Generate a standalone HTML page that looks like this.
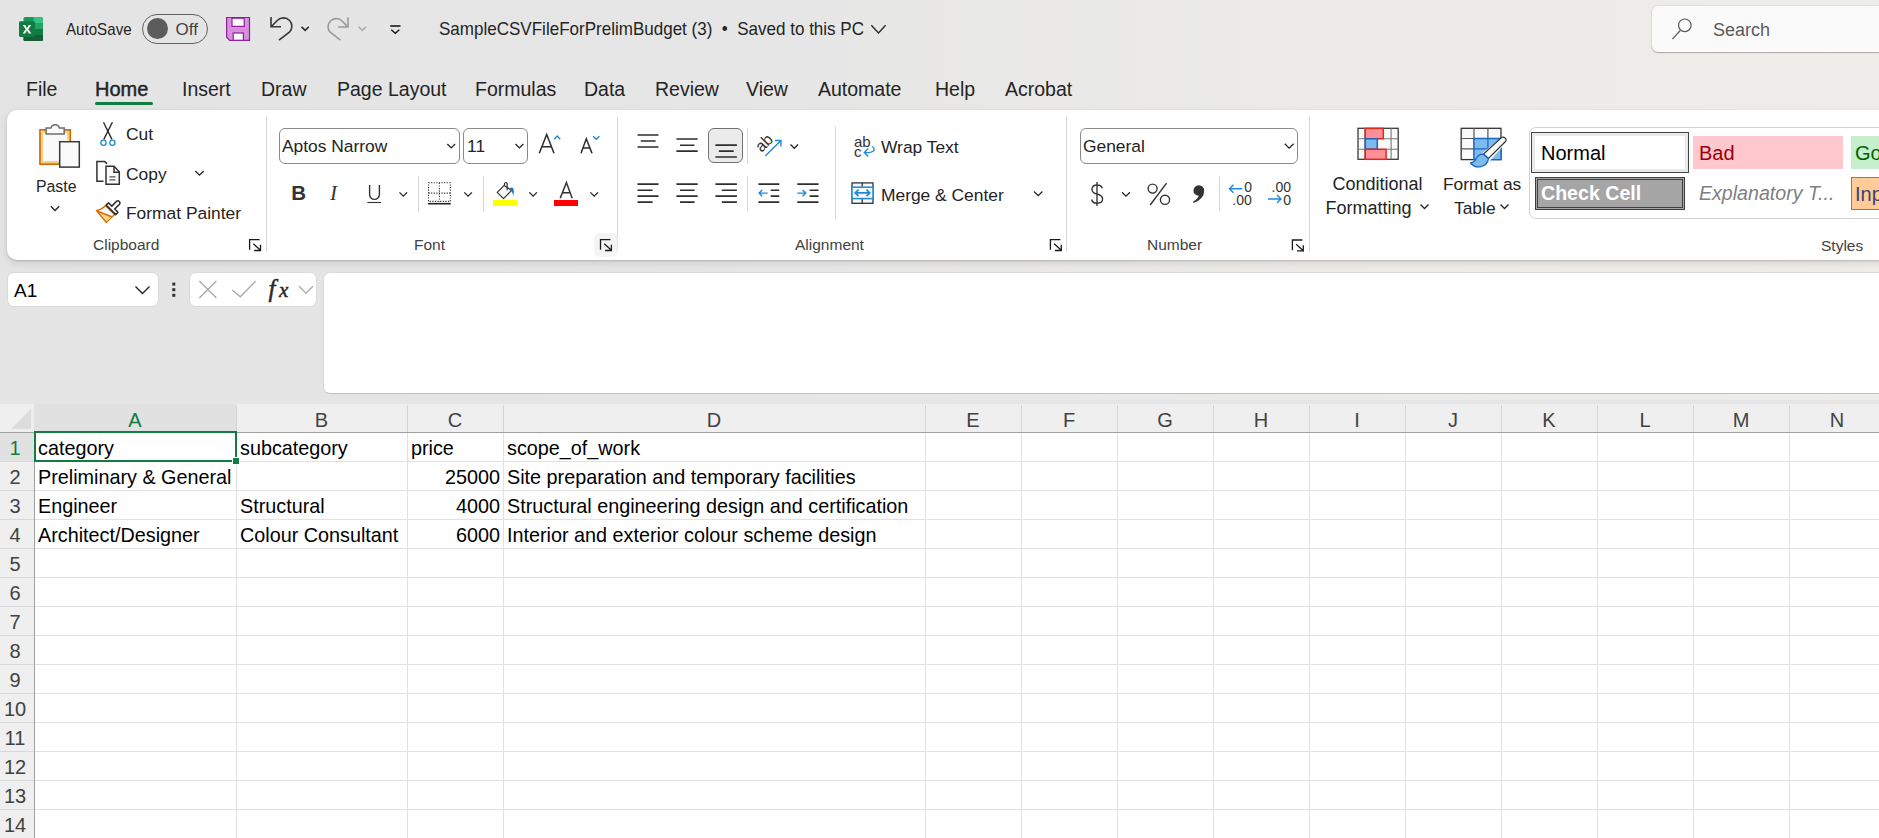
<!DOCTYPE html>
<html><head><meta charset="utf-8">
<style>
html,body{margin:0;padding:0;width:1879px;height:838px;overflow:hidden;}
body{position:relative;font-family:"Liberation Sans",sans-serif;color:#242424;background:#e5e5e5;}
.a{position:absolute;white-space:nowrap;line-height:1;}
#top{position:absolute;left:0;top:0;width:1879px;height:400px;background:linear-gradient(90deg,#e4e4e4 0%,#e6e6e6 40%,#ecebe8 70%,#efedea 100%);}
#ribbon{position:absolute;left:7px;top:110px;width:1900px;height:150px;background:#fff;border-radius:10px;box-shadow:0 1px 2px rgba(0,0,0,0.16), 0 3px 9px rgba(0,0,0,0.10);}
.t{font-size:19.5px;color:#242424;}
.lbl{font-size:17.4px;color:#242424;}
.grp{font-size:15.5px;color:#424242;}
.vsep{position:absolute;width:1px;background:#d6d6d6;}
.box{position:absolute;background:#fff;border:1px solid #8a8a8a;border-radius:6px;box-sizing:border-box;}
#grid{position:absolute;left:0;top:404px;width:1879px;height:434px;background:#fff;}
.cell{font-size:19.8px;color:#000;}
.hdr{font-size:20px;color:#444;}
</style></head><body>
<div id="top"></div>

<!-- Title bar -->
<div class="a" style="left:65.5px;top:20.6px;font-size:17px;color:#242424;transform:scaleX(0.89);transform-origin:0 0;">AutoSave</div>
<div style="position:absolute;left:142px;top:14px;width:64px;height:28px;border:1px solid #616161;border-radius:15px;background:#fff0;"></div>
<div style="position:absolute;left:147px;top:18px;width:21px;height:21px;border-radius:50%;background:#5c5c5c;"></div>
<div class="a" style="left:175.5px;top:21px;font-size:17px;color:#424242;">Off</div>
<div class="a" style="left:438.5px;top:19.8px;font-size:18.5px;color:#242424;transform:scaleX(0.92);transform-origin:0 0;">SampleCSVFileForPrelimBudget (3) &nbsp;•&nbsp; Saved to this PC</div>
<div style="position:absolute;left:1652px;top:6px;width:260px;height:46px;background:#fafafa;border-radius:6px;box-shadow:0 1px 1px rgba(0,0,0,0.25), 0 0 0 1px rgba(0,0,0,0.06);"></div>
<div class="a" style="left:1713px;top:21px;font-size:18px;color:#5a5a5a;">Search</div>

<!-- Tabs -->
<div class="a t" style="left:26px;top:80px;">File</div>
<div class="a t" style="left:95px;top:79px;font-size:20px;-webkit-text-stroke:0.45px #242424;">Home</div>
<div style="position:absolute;left:95px;top:102px;width:58px;height:3px;border-radius:2px;background:#107c41;"></div>
<div class="a t" style="left:182px;top:80px;">Insert</div>
<div class="a t" style="left:261px;top:80px;">Draw</div>
<div class="a t" style="left:337px;top:80px;">Page Layout</div>
<div class="a t" style="left:475px;top:80px;">Formulas</div>
<div class="a t" style="left:584px;top:80px;">Data</div>
<div class="a t" style="left:655px;top:80px;">Review</div>
<div class="a t" style="left:746px;top:80px;">View</div>
<div class="a t" style="left:818px;top:80px;">Automate</div>
<div class="a t" style="left:935px;top:80px;">Help</div>
<div class="a t" style="left:1005px;top:80px;">Acrobat</div>

<!-- Ribbon -->
<div id="ribbon"></div>
<div class="vsep" style="left:266px;top:117px;height:134px;"></div>
<div class="vsep" style="left:617px;top:117px;height:134px;"></div>
<div class="vsep" style="left:1066px;top:117px;height:134px;"></div>
<div class="vsep" style="left:1309px;top:117px;height:134px;"></div>

<!-- Clipboard -->
<div class="a lbl" style="left:36px;top:178px;transform:scaleX(0.91);transform-origin:0 0;">Paste</div>
<div class="a lbl" style="left:126px;top:126px;">Cut</div>
<div class="a lbl" style="left:126px;top:166px;">Copy</div>
<div class="a lbl" style="left:126px;top:205px;">Format Painter</div>
<div class="a grp" style="left:93px;top:237px;">Clipboard</div>

<!-- Font -->
<div class="box" style="left:279px;top:128px;width:181px;height:36px;"></div>
<div class="a" style="left:282px;top:138px;font-size:17.4px;color:#242424;">Aptos Narrow</div>
<div class="box" style="left:463px;top:128px;width:65px;height:36px;"></div>
<div class="a" style="left:467px;top:138px;font-size:17.4px;color:#242424;">11</div>
<div class="a grp" style="left:414px;top:237px;">Font</div>

<!-- Alignment -->
<div style="position:absolute;left:708px;top:128px;width:35px;height:35px;border:1px solid #707070;border-radius:6px;background:#ebebeb;box-sizing:border-box;"></div>
<div class="a lbl" style="left:881px;top:139px;">Wrap Text</div>
<div class="a lbl" style="left:881px;top:187px;">Merge &amp; Center</div>
<div class="a grp" style="left:795px;top:237px;">Alignment</div>

<!-- Number -->
<div class="box" style="left:1080px;top:128px;width:218px;height:36px;"></div>
<div class="a" style="left:1083px;top:138px;font-size:17.4px;color:#242424;">General</div>
<div class="a grp" style="left:1147px;top:237px;">Number</div>

<!-- Styles -->
<div class="a lbl" style="left:1332.5px;top:175px;font-size:18px;">Conditional</div>
<div class="a lbl" style="left:1325.5px;top:199px;font-size:18px;">Formatting</div>
<div class="a lbl" style="left:1443px;top:176px;">Format as</div>
<div class="a lbl" style="left:1454px;top:200px;">Table</div>
<!-- Styles gallery -->
<div style="position:absolute;left:1529px;top:127px;width:400px;height:92px;border:1px solid #d2d2d2;border-radius:7px;box-sizing:border-box;background:#fff;"></div>
<div style="position:absolute;left:1531px;top:132px;width:158px;height:41px;border:1px solid #454545;box-sizing:border-box;background:#fff;box-shadow:inset 0 0 0 3px #e9e9e9;"></div>
<div class="a" style="left:1541px;top:143px;font-size:20px;color:#000;">Normal</div>
<div style="position:absolute;left:1693px;top:136px;width:150px;height:33px;background:#ffc7ce;"></div>
<div class="a" style="left:1699px;top:143px;font-size:20px;color:#9c0006;">Bad</div>
<div style="position:absolute;left:1851px;top:136px;width:60px;height:33px;background:#c6efce;"></div>
<div class="a" style="left:1855px;top:143px;font-size:20px;color:#006100;">Good</div>
<div style="position:absolute;left:1535px;top:177px;width:150px;height:33px;border:1px solid #3f3f3f;box-sizing:border-box;background:#a5a5a5;box-shadow:inset 0 0 0 1px #a5a5a5, inset 0 0 0 2px #3f3f3f;"></div>
<div class="a" style="left:1541px;top:184px;font-size:19.6px;font-weight:bold;color:#fff;">Check Cell</div>
<div class="a" style="left:1699px;top:184px;font-size:19.6px;font-style:italic;color:#7f7f7f;">Explanatory T...</div>
<div style="position:absolute;left:1851px;top:177px;width:60px;height:33px;border:1px solid #7f7f7f;box-sizing:border-box;background:#ffcc99;"></div>
<div class="a" style="left:1855px;top:184px;font-size:20px;color:#3f3f76;">Input</div>
<div class="a grp" style="left:1821px;top:238px;">Styles</div>

<!-- Formula bar -->
<div style="position:absolute;left:7px;top:272px;width:152px;height:35px;background:#fff;border-radius:7px;border:1px solid #dadada;box-sizing:border-box;"></div>
<div class="a" style="left:14px;top:280.5px;font-size:19px;color:#000;">A1</div>
<div style="position:absolute;left:189px;top:272px;width:128px;height:35px;background:#fff;border-radius:7px;border:1px solid #dadada;box-sizing:border-box;"></div>
<div style="position:absolute;left:323px;top:272px;width:1600px;height:122px;background:#fff;border-radius:7px;border:1px solid #d9d9d9;border-bottom-color:#c2c2c2;box-sizing:border-box;"></div>

<!-- Grid -->
<div id="grid"></div>
<!--GRID-->
<div style="position:absolute;left:0;top:404px;width:1879px;height:28px;background:#efefef;"></div>
<div style="position:absolute;left:0;top:432px;width:34px;height:406px;background:#efefef;"></div>
<div style="position:absolute;left:34px;top:404px;width:202px;height:28px;background:#e1e1e1;"></div>
<div style="position:absolute;left:0;top:432px;width:34px;height:29px;background:#e1e1e1;"></div>
<svg style="position:absolute;left:0;top:404px" width="34" height="28"><polygon points="31,5 31,25 11,25" fill="#dcdcdc"/></svg>
<div style="position:absolute;left:236px;top:405px;width:1px;height:27px;background:#d4d4d4;"></div>
<div style="position:absolute;left:236px;top:433px;width:1px;height:405px;background:#e1e1e1;"></div>
<div style="position:absolute;left:407px;top:405px;width:1px;height:27px;background:#d4d4d4;"></div>
<div style="position:absolute;left:407px;top:433px;width:1px;height:405px;background:#e1e1e1;"></div>
<div style="position:absolute;left:503px;top:405px;width:1px;height:27px;background:#d4d4d4;"></div>
<div style="position:absolute;left:503px;top:433px;width:1px;height:405px;background:#e1e1e1;"></div>
<div style="position:absolute;left:925px;top:405px;width:1px;height:27px;background:#d4d4d4;"></div>
<div style="position:absolute;left:925px;top:433px;width:1px;height:405px;background:#e1e1e1;"></div>
<div style="position:absolute;left:1021px;top:405px;width:1px;height:27px;background:#d4d4d4;"></div>
<div style="position:absolute;left:1021px;top:433px;width:1px;height:405px;background:#e1e1e1;"></div>
<div style="position:absolute;left:1117px;top:405px;width:1px;height:27px;background:#d4d4d4;"></div>
<div style="position:absolute;left:1117px;top:433px;width:1px;height:405px;background:#e1e1e1;"></div>
<div style="position:absolute;left:1213px;top:405px;width:1px;height:27px;background:#d4d4d4;"></div>
<div style="position:absolute;left:1213px;top:433px;width:1px;height:405px;background:#e1e1e1;"></div>
<div style="position:absolute;left:1309px;top:405px;width:1px;height:27px;background:#d4d4d4;"></div>
<div style="position:absolute;left:1309px;top:433px;width:1px;height:405px;background:#e1e1e1;"></div>
<div style="position:absolute;left:1405px;top:405px;width:1px;height:27px;background:#d4d4d4;"></div>
<div style="position:absolute;left:1405px;top:433px;width:1px;height:405px;background:#e1e1e1;"></div>
<div style="position:absolute;left:1501px;top:405px;width:1px;height:27px;background:#d4d4d4;"></div>
<div style="position:absolute;left:1501px;top:433px;width:1px;height:405px;background:#e1e1e1;"></div>
<div style="position:absolute;left:1597px;top:405px;width:1px;height:27px;background:#d4d4d4;"></div>
<div style="position:absolute;left:1597px;top:433px;width:1px;height:405px;background:#e1e1e1;"></div>
<div style="position:absolute;left:1693px;top:405px;width:1px;height:27px;background:#d4d4d4;"></div>
<div style="position:absolute;left:1693px;top:433px;width:1px;height:405px;background:#e1e1e1;"></div>
<div style="position:absolute;left:1789px;top:405px;width:1px;height:27px;background:#d4d4d4;"></div>
<div style="position:absolute;left:1789px;top:433px;width:1px;height:405px;background:#e1e1e1;"></div>
<div style="position:absolute;left:1885px;top:405px;width:1px;height:27px;background:#d4d4d4;"></div>
<div style="position:absolute;left:1885px;top:433px;width:1px;height:405px;background:#e1e1e1;"></div>
<div style="position:absolute;left:35px;top:461px;width:1844px;height:1px;background:#e1e1e1;"></div>
<div style="position:absolute;left:0px;top:461px;width:34px;height:1px;background:#d8d8d8;"></div>
<div style="position:absolute;left:35px;top:490px;width:1844px;height:1px;background:#e1e1e1;"></div>
<div style="position:absolute;left:0px;top:490px;width:34px;height:1px;background:#d8d8d8;"></div>
<div style="position:absolute;left:35px;top:519px;width:1844px;height:1px;background:#e1e1e1;"></div>
<div style="position:absolute;left:0px;top:519px;width:34px;height:1px;background:#d8d8d8;"></div>
<div style="position:absolute;left:35px;top:548px;width:1844px;height:1px;background:#e1e1e1;"></div>
<div style="position:absolute;left:0px;top:548px;width:34px;height:1px;background:#d8d8d8;"></div>
<div style="position:absolute;left:35px;top:577px;width:1844px;height:1px;background:#e1e1e1;"></div>
<div style="position:absolute;left:0px;top:577px;width:34px;height:1px;background:#d8d8d8;"></div>
<div style="position:absolute;left:35px;top:606px;width:1844px;height:1px;background:#e1e1e1;"></div>
<div style="position:absolute;left:0px;top:606px;width:34px;height:1px;background:#d8d8d8;"></div>
<div style="position:absolute;left:35px;top:635px;width:1844px;height:1px;background:#e1e1e1;"></div>
<div style="position:absolute;left:0px;top:635px;width:34px;height:1px;background:#d8d8d8;"></div>
<div style="position:absolute;left:35px;top:664px;width:1844px;height:1px;background:#e1e1e1;"></div>
<div style="position:absolute;left:0px;top:664px;width:34px;height:1px;background:#d8d8d8;"></div>
<div style="position:absolute;left:35px;top:693px;width:1844px;height:1px;background:#e1e1e1;"></div>
<div style="position:absolute;left:0px;top:693px;width:34px;height:1px;background:#d8d8d8;"></div>
<div style="position:absolute;left:35px;top:722px;width:1844px;height:1px;background:#e1e1e1;"></div>
<div style="position:absolute;left:0px;top:722px;width:34px;height:1px;background:#d8d8d8;"></div>
<div style="position:absolute;left:35px;top:751px;width:1844px;height:1px;background:#e1e1e1;"></div>
<div style="position:absolute;left:0px;top:751px;width:34px;height:1px;background:#d8d8d8;"></div>
<div style="position:absolute;left:35px;top:780px;width:1844px;height:1px;background:#e1e1e1;"></div>
<div style="position:absolute;left:0px;top:780px;width:34px;height:1px;background:#d8d8d8;"></div>
<div style="position:absolute;left:35px;top:809px;width:1844px;height:1px;background:#e1e1e1;"></div>
<div style="position:absolute;left:0px;top:809px;width:34px;height:1px;background:#d8d8d8;"></div>
<div style="position:absolute;left:35px;top:838px;width:1844px;height:1px;background:#e1e1e1;"></div>
<div style="position:absolute;left:0px;top:838px;width:34px;height:1px;background:#d8d8d8;"></div>
<div style="position:absolute;left:0;top:432px;width:1879px;height:1px;background:#a0a0a0;"></div>
<div style="position:absolute;left:34px;top:432px;width:1px;height:406px;background:#a0a0a0;"></div>
<div class="a hdr" style="left:34px;width:202px;text-align:center;top:410px;color:#107c41;">A</div>
<div class="a hdr" style="left:236px;width:171px;text-align:center;top:410px;color:#424242;">B</div>
<div class="a hdr" style="left:407px;width:96px;text-align:center;top:410px;color:#424242;">C</div>
<div class="a hdr" style="left:503px;width:422px;text-align:center;top:410px;color:#424242;">D</div>
<div class="a hdr" style="left:925px;width:96px;text-align:center;top:410px;color:#424242;">E</div>
<div class="a hdr" style="left:1021px;width:96px;text-align:center;top:410px;color:#424242;">F</div>
<div class="a hdr" style="left:1117px;width:96px;text-align:center;top:410px;color:#424242;">G</div>
<div class="a hdr" style="left:1213px;width:96px;text-align:center;top:410px;color:#424242;">H</div>
<div class="a hdr" style="left:1309px;width:96px;text-align:center;top:410px;color:#424242;">I</div>
<div class="a hdr" style="left:1405px;width:96px;text-align:center;top:410px;color:#424242;">J</div>
<div class="a hdr" style="left:1501px;width:96px;text-align:center;top:410px;color:#424242;">K</div>
<div class="a hdr" style="left:1597px;width:96px;text-align:center;top:410px;color:#424242;">L</div>
<div class="a hdr" style="left:1693px;width:96px;text-align:center;top:410px;color:#424242;">M</div>
<div class="a hdr" style="left:1789px;width:96px;text-align:center;top:410px;color:#424242;">N</div>
<div class="a hdr" style="left:0;width:30px;text-align:center;top:438px;color:#107c41;">1</div>
<div class="a hdr" style="left:0;width:30px;text-align:center;top:467px;color:#424242;">2</div>
<div class="a hdr" style="left:0;width:30px;text-align:center;top:496px;color:#424242;">3</div>
<div class="a hdr" style="left:0;width:30px;text-align:center;top:525px;color:#424242;">4</div>
<div class="a hdr" style="left:0;width:30px;text-align:center;top:554px;color:#424242;">5</div>
<div class="a hdr" style="left:0;width:30px;text-align:center;top:583px;color:#424242;">6</div>
<div class="a hdr" style="left:0;width:30px;text-align:center;top:612px;color:#424242;">7</div>
<div class="a hdr" style="left:0;width:30px;text-align:center;top:641px;color:#424242;">8</div>
<div class="a hdr" style="left:0;width:30px;text-align:center;top:670px;color:#424242;">9</div>
<div class="a hdr" style="left:0;width:30px;text-align:center;top:699px;color:#424242;">10</div>
<div class="a hdr" style="left:0;width:30px;text-align:center;top:728px;color:#424242;">11</div>
<div class="a hdr" style="left:0;width:30px;text-align:center;top:757px;color:#424242;">12</div>
<div class="a hdr" style="left:0;width:30px;text-align:center;top:786px;color:#424242;">13</div>
<div class="a hdr" style="left:0;width:30px;text-align:center;top:815px;color:#424242;">14</div>
<div class="a cell" style="left:38px;top:439px;">category</div>
<div class="a cell" style="left:240px;top:439px;">subcategory</div>
<div class="a cell" style="left:411px;top:439px;">price</div>
<div class="a cell" style="left:507px;top:439px;">scope_of_work</div>
<div class="a cell" style="left:38px;top:468px;">Preliminary &amp; General</div>
<div class="a cell" style="left:407px;width:93px;text-align:right;top:468px;">25000</div>
<div class="a cell" style="left:507px;top:468px;">Site preparation and temporary facilities</div>
<div class="a cell" style="left:38px;top:497px;">Engineer</div>
<div class="a cell" style="left:240px;top:497px;">Structural</div>
<div class="a cell" style="left:407px;width:93px;text-align:right;top:497px;">4000</div>
<div class="a cell" style="left:507px;top:497px;">Structural engineering design and certification</div>
<div class="a cell" style="left:38px;top:526px;">Architect/Designer</div>
<div class="a cell" style="left:240px;top:526px;">Colour Consultant</div>
<div class="a cell" style="left:407px;width:93px;text-align:right;top:526px;">6000</div>
<div class="a cell" style="left:507px;top:526px;">Interior and exterior colour scheme design</div>
<div style="position:absolute;left:34px;top:431px;width:203px;height:31px;border:2px solid #107c41;box-sizing:border-box;"></div>
<div style="position:absolute;left:232px;top:457px;width:6px;height:6px;background:#107c41;border:1px solid #fff;box-sizing:content-box;"></div>
<!--/GRID-->

<!--ICONS-->
<svg style="position:absolute;left:0;top:0" width="1879" height="838">
<!-- excel logo -->
<g>
<rect x="23.5" y="17" width="19.5" height="24" rx="1.5" fill="#1a9a5a"/>
<path d="M33.5 17 H41.5 Q43 17 43 18.5 V23 H33.5 Z" fill="#33c481"/>
<rect x="33.5" y="23" width="9.5" height="6" fill="#21a366"/>
<rect x="33.5" y="29" width="9.5" height="6" fill="#107c41"/>
<path d="M23.5 35 H43 V39.5 Q43 41 41.5 41 H25 Q23.5 41 23.5 39.5 Z" fill="#185c37"/>
<rect x="19" y="21.3" width="16" height="15.6" rx="1.3" fill="#107c41"/>
<path d="M22.8 25 L25.3 25 L27 28.2 L28.8 25 L31.2 25 L28.3 29.2 L31.3 33.4 L28.8 33.4 L27 30.2 L25.2 33.4 L22.7 33.4 L25.7 29.2 Z" fill="#fff"/>
</g>
<!-- save -->
<path d="M226.6 17.5 H249.5 V40.3 H229.7 L226.6 37.2 Z" fill="#d890dc" stroke="#8f1f9f" stroke-width="1.2"/>
<rect x="232" y="18.2" width="12.2" height="8.2" fill="#fafafa" stroke="#8f1f9f" stroke-width="1.2"/>
<rect x="233.2" y="33" width="10.2" height="7.3" fill="#fafafa" stroke="#8f1f9f" stroke-width="1.2"/>
<!-- undo -->
<g fill="none" stroke="#363636" stroke-width="1.6">
<path d="M271 17 V26.8 H281"/>
<path d="M271.6 26.2 L277.5 20.3 A8.4 8.4 0 0 1 289.4 32.2 L279 40.2"/>
<path d="M301.5 26.8 L305.2 30.3 L308.8 26.8" stroke="#2a2a2a"/>
</g>
<!-- redo -->
<g fill="none" stroke="#9a9a9a" stroke-width="1.6">
<path d="M348 17.2 V27 H338.2"/>
<path d="M347.4 26.4 L341.5 20.5 A8.2 8.2 0 0 0 329.9 32 L340.4 40.2"/>
<path d="M358.6 26.8 L362.3 30.3 L366 26.8" stroke="#b0b0b0"/>
</g>
<!-- qat -->
<path d="M390.2 26 H400.5" stroke="#1a1a1a" stroke-width="1.6"/>
<path d="M391.3 29.8 L395.3 33.3 L399.3 29.8" fill="none" stroke="#1a1a1a" stroke-width="1.5"/>
<!-- title chevron -->
<path d="M871.3 25.3 L878.5 33 L885.6 25.3" fill="none" stroke="#2a2a2a" stroke-width="1.4"/>
<!-- paste -->
<rect x="40" y="129.9" width="30.2" height="34.2" fill="#fafafa" stroke="#d86400" stroke-width="1.7"/>
<path d="M42.1 132 H68.1 V140 M42.1 132 V162 H59" fill="none" stroke="#f4d27c" stroke-width="2"/>
<path d="M46.1 128.1 H51 A4.3 4.3 0 0 1 59.4 128.1 H64.2 V134 H46.1 Z" fill="#fafafa" stroke="#6e6e6e" stroke-width="1.5"/>
<rect x="59.7" y="141.7" width="19.6" height="25.4" fill="#fafafa" stroke="#383838" stroke-width="1.5"/>
<path d="M50.8 206.3 L55 210.5 L59.2 206.3" fill="none" stroke="#242424" stroke-width="1.3"/>
<!-- scissors -->
<g stroke="#262626" stroke-width="1.35" fill="none">
<path d="M103.5 122.2 L111.9 139.4"/><path d="M112.4 122.2 L103.8 139.4"/>
</g>
<circle cx="103.5" cy="142.8" r="2.6" fill="#fff" stroke="#1e8ad6" stroke-width="1.3"/>
<circle cx="112.4" cy="142.8" r="2.6" fill="#fff" stroke="#1e8ad6" stroke-width="1.3"/>
<!-- copy -->
<g stroke="#333" stroke-width="1.5" fill="none">
<path d="M103.5 181.2 H96.9 V161.6 H104.6 L107.1 163.6"/>
<path d="M106 166.2 H114 L119.3 171.7 V184.3 H106 Z" fill="#fafafa"/>
<path d="M114 166.2 V172.2 H119.3"/>
</g>
<g stroke="#555" stroke-width="1.2"><path d="M109.4 176.8 H115.5 M109.4 179.9 H115.5"/></g>
<path d="M195.3 171 L199.5 175.2 L203.7 171" fill="none" stroke="#242424" stroke-width="1.3"/>
<!-- format painter -->
<path d="M96.5 210.5 Q101.5 210 105.7 205.6 L114.6 214.5 L106.3 222.2 Z" fill="#fafafa" stroke="#dc6a00" stroke-width="1.5" stroke-linejoin="round"/>
<path d="M100.5 213.3 L111.8 217.2 L106.4 221.3 Z" fill="#f8d57f"/>
<path d="M97.5 211.3 L112.3 217" stroke="#dc6a00" stroke-width="1.5"/>
<path d="M106.2 205.1 L108.5 202.8 L111.8 206.1 L116.6 201.3 Q117.8 200.1 119 201.3 L119.5 201.8 Q120.7 203 119.5 204.2 L114.7 209 L118 212.3 L115.7 214.6 Z" fill="#fafafa" stroke="#2a2a2a" stroke-width="1.5" stroke-linejoin="round"/>
<!-- launchers -->
<rect x="594.3" y="233" width="23.3" height="23.8" rx="5" fill="#f4f4f4"/>
<g fill="none" stroke="#1a1a1a" stroke-width="1.3">
<path d="M249.6 249.79999999999998 V239.6 H259.6 M253.4 243.79999999999998 L260.2 250.1 M260.5 244.79999999999998 V250.5 H254.2"/>
<path d="M600.5 249.79999999999998 V239.6 H610.5 M604.3 243.79999999999998 L611.1 250.1 M611.4 244.79999999999998 V250.5 H605.1"/>
<path d="M1050.4 249.79999999999998 V239.6 H1060.4 M1054.2 243.79999999999998 L1061.0 250.1 M1061.3000000000002 244.79999999999998 V250.5 H1055.0"/>
<path d="M1292.4 250.2 V240 H1302.4 M1296.2 244.2 L1303.0 250.5 M1303.3000000000002 245.2 V250.9 H1297.0"/>
</g>
<!-- font group -->
<g fill="none" stroke="#242424" stroke-width="1.3">
<path d="M447.3 144 L451.2 147.9 L455.1 144"/>
<path d="M515.5 144 L519.4 147.9 L523.3 144"/>
</g>
<g fill="none" stroke="#2a2a2a" stroke-width="1.5">
<path d="M539.3 153.2 L546.7 134.5 L554 153.2 M541.8 146.7 H551.4"/>
<path d="M581 153.2 L586.3 138.8 L592 153.2 M582.8 147.9 H590.2"/>
</g>
<g fill="none" stroke="#1e8ad6" stroke-width="1.5">
<path d="M554.3 139.2 L557.2 136 L560.2 139.2"/>
<path d="M593.2 136.2 L596.3 139.2 L599.4 136.2"/>
</g>
<text x="291.3" y="200" font-family="Liberation Sans" font-weight="bold" font-size="20.5" fill="#333">B</text>
<text x="330" y="200" font-family="Liberation Serif" font-style="italic" font-size="21" fill="#333">I</text>
<path d="M369.6 185 V194.5 A4.9 4.9 0 0 0 379.4 194.5 V185" fill="none" stroke="#333" stroke-width="1.4"/>
<path d="M367.3 202.5 H381" stroke="#333" stroke-width="1.1"/>
<g fill="none" stroke="#242424" stroke-width="1.3">
<path d="M399.5 192.4 L403.3 196.2 L407.1 192.4"/>
<path d="M464.3 192.4 L468.1 196.2 L471.9 192.4"/>
<path d="M529.3 192.4 L533.1 196.2 L536.9 192.4"/>
<path d="M590.4 192.4 L594.2 196.2 L598 192.4"/>
</g>
<rect x="418" y="176.3" width="1" height="35.5" fill="#d6d6d6"/>
<rect x="483" y="176.3" width="1" height="35.5" fill="#d6d6d6"/>
<g fill="none" stroke="#333" stroke-width="1.1" stroke-dasharray="1.2 1.4">
<rect x="428.5" y="182.8" width="21.8" height="18.6"/>
<path d="M439.4 182.8 V201.4 M428.5 193.1 H450.3"/>
</g>
<path d="M428 203.7 H450.8" stroke="#242424" stroke-width="1.6"/>
<path d="M497.2 192.4 L504.2 185.4 L511.6 190.4 L503.5 198.7 Z" fill="#f5f5f5" stroke="#333" stroke-width="1.2" stroke-linejoin="round"/>
<path d="M504.5 186 V183.5 Q506 181.5 507.2 183.5 V190.3" fill="none" stroke="#333" stroke-width="1.2"/>
<path d="M509.8 188.2 Q513.8 186 513.8 191.5 L513.4 196.6 Q512.5 192 511 190.5 Z" fill="#1a72c9"/>
<rect x="493" y="200" width="24" height="6" fill="#ffff00"/>
<path d="M560.2 198.3 L566.4 182.6 L572.2 198.3 M562.4 192.8 H570.2" fill="none" stroke="#333" stroke-width="1.5"/>
<rect x="554" y="200" width="24" height="6" fill="#ff0000"/>
<!-- alignment -->
<g stroke="#2e2e2e" stroke-width="1.55" fill="none">
<path d="M637.5 134.9 H658.5 M640.7 140.9 H655.6 M637.5 147 H658.5"/>
<path d="M676.4 139 H697.7 M680 145.2 H694.4 M676.4 151.1 H697.7"/>
<path d="M715.4 145.1 H736.9 M718.9 151.1 H733.7 M715.4 157 H736.9"/>
<path d="M637.5 184.1 H658.5 M637.5 190.2 H652.6 M637.5 196.1 H658.5 M637.5 202.1 H652.6"/>
<path d="M676.4 184.1 H697.7 M680 190.2 H694.6 M676.4 196.1 H697.7 M680 202.1 H694.6"/>
<path d="M715.4 184.1 H736.9 M721.8 190.2 H736.9 M715.4 196.1 H736.9 M721.8 202.1 H736.9"/>
<path d="M758.4 184.1 H779.3 M770.7 190.2 H779.3 M770.7 196.1 H779.3 M758.4 202.1 H779.3"/>
<path d="M797.3 184.1 H818.5 M809.6 190.2 H818.5 M809.6 196.1 H818.5 M797.3 202.1 H818.5"/>
</g>
<g stroke="#1e8ad6" stroke-width="1.4" fill="none">
<path d="M767.7 193.1 H759.3 M762.2 190 L759.1 193.1 L762.2 196.2"/>
<path d="M797.3 193.1 H805.5 M802.6 190 L805.7 193.1 L802.6 196.2"/>
<path d="M765.3 156.1 L780.7 140.7 M775 140.5 H780.9 V146.4"/>
</g>
<text x="0" y="0" font-family="Liberation Sans" font-size="16" fill="#333" transform="translate(761.5 153) rotate(-45)">ab</text>
<g fill="none" stroke="#242424" stroke-width="1.3">
<path d="M790.5 144.5 L794.3 148.3 L798.1 144.5"/>
<path d="M1034 191.5 L1038.2 195.7 L1042.4 191.5"/>
</g>
<rect x="747" y="128.2" width="1" height="35.5" fill="#d6d6d6"/>
<rect x="747" y="176.3" width="1" height="35.2" fill="#d6d6d6"/>
<rect x="835" y="126.5" width="1" height="93" fill="#d6d6d6"/>
<text x="854" y="146.8" font-family="Liberation Sans" font-size="15" fill="#333">ab</text>
<text x="854" y="156.6" font-family="Liberation Sans" font-size="15" fill="#333">c</text>
<path d="M872 146.5 Q875.5 148.5 873.5 151 Q871 153 864.5 152.6 M868.3 148.6 L864.3 152.6 L868.3 156.6" fill="none" stroke="#1e8ad6" stroke-width="1.4"/>
<rect x="852" y="182.9" width="21" height="20.4" fill="#f8f8f8" stroke="#333" stroke-width="1.3"/>
<path d="M862.2 182.9 V186.7 M862.2 198.9 V203.3" stroke="#333" stroke-width="1.3"/>
<rect x="852" y="187.2" width="21" height="11.4" fill="#f8f8f8" stroke="#1e8ad6" stroke-width="1.5"/>
<path d="M855.5 192.9 H869.5 M858.5 189.6 L855.2 192.9 L858.5 196.2 M866.5 189.6 L869.8 192.9 L866.5 196.2" fill="none" stroke="#1e8ad6" stroke-width="1.7"/>
<!-- number -->
<path d="M1284.8 143.8 L1289.2 148.2 L1293.6 143.8" fill="none" stroke="#242424" stroke-width="1.3"/>
<path d="M1097 182 V206 M1102.3 188.3 Q1101.3 185 1097 185 Q1092 185 1092 189.5 Q1092 193 1097 194 Q1102.6 195.3 1102.6 199 Q1102.6 203.2 1097 203.2 Q1092.3 203.2 1091.6 199.5" fill="none" stroke="#333" stroke-width="1.35"/>
<g fill="none" stroke="#333" stroke-width="1.4"><circle cx="1152.6" cy="188.6" r="4.5"/><circle cx="1165" cy="199.8" r="4.6"/><path d="M1166.6 183.2 L1150.2 205"/></g>
<path d="M1122 192.2 L1126 196.2 L1130 192.2" fill="none" stroke="#242424" stroke-width="1.3"/>
<path d="M1198.6 185.3 A5.3 5.3 0 0 1 1204.2 190.8 Q1204.2 199 1193.5 203 L1193 201.8 Q1198 199 1198.8 195.8 A5.2 5.2 0 0 1 1198.6 185.3 Z" fill="#333"/>
<rect x="1219" y="176.3" width="1" height="35" fill="#d6d6d6"/>
<g font-family="Liberation Sans" font-size="14" fill="#333">
<text x="1244.3" y="192.3">0</text>
<text x="1232.3" y="204.6">.00</text>
<text x="1271.5" y="192.3">.00</text>
<text x="1283.3" y="204.6">0</text>
</g>
<g stroke="#1e8ad6" stroke-width="1.4" fill="none">
<path d="M1242.3 188.7 H1229.5 M1233.5 184.7 L1229.5 188.7 L1233.5 192.7"/>
<path d="M1268 199 H1281 M1277 195 L1281 199 L1277 203"/>
</g>
<!-- cond fmt -->
<rect x="1358" y="128.3" width="40.2" height="31" fill="#fafafa" stroke="#3a3a3a" stroke-width="1.3"/>
<path d="M1358 138.8 H1398 M1358 149.2 H1398 M1391.1 128.3 V159.3 M1364.8 128.3 V159.3" stroke="#777" stroke-width="1.1"/>
<rect x="1365.3" y="128.4" width="18" height="10.3" fill="#ff8f96" stroke="#dc2a1f" stroke-width="1.5"/>
<rect x="1365.3" y="138.8" width="12" height="10.3" fill="#7fbbea" stroke="#1767c7" stroke-width="1.5"/>
<rect x="1365.3" y="149.3" width="20.8" height="10" fill="#ff8f96" stroke="#dc2a1f" stroke-width="1.5"/>
<path d="M1420.5 204.5 L1424.5 208.5 L1428.5 204.5" fill="none" stroke="#242424" stroke-width="1.3"/>
<!-- fmt as table -->
<rect x="1461.2" y="128.3" width="39.8" height="31.3" fill="#fafafa" stroke="#333" stroke-width="1.3"/>
<path d="M1474 128.3 V159.6 M1487.9 128.3 V159.6 M1461.2 138.5 H1501 M1461.2 148.8 H1501" stroke="#555" stroke-width="1.2"/>
<path d="M1474 138.5 H1501 V159.6 H1474 Z" fill="#7fbbea" stroke="#1767c7" stroke-width="1.3"/>
<path d="M1487.9 138.5 V159.6 M1474 148.8 H1501" stroke="#1767c7" stroke-width="1.2"/>
<path d="M1505.5 137.5 L1484 155 L1488 159 L1506.5 138.5 Z" fill="#fff" stroke="#fff" stroke-width="5" stroke-linejoin="round"/>
<path d="M1505 138 Q1507 139.5 1505.5 141.5 L1488.5 158.5 L1483.5 154 L1501.5 137.5 Q1503.5 136.5 1505 138 Z" fill="#fafafa" stroke="#333" stroke-width="1.2"/>
<path d="M1483.3 154.2 Q1479 154 1476.5 158 Q1475 162 1470.5 163 Q1474 167.5 1480 166.8 Q1487.5 165.5 1488.5 158.7 Z" fill="#7fbbea" stroke="#1767c7" stroke-width="1.3" stroke-linejoin="round"/>
<path d="M1500.5 204.5 L1504.5 208.5 L1508.5 204.5" fill="none" stroke="#242424" stroke-width="1.3"/>
<!-- formula bar -->
<path d="M135.5 286.5 L142.5 293.5 L149.5 286.5" fill="none" stroke="#242424" stroke-width="1.4"/>
<g fill="#333"><rect x="172.3" y="282.6" width="3" height="3"/><rect x="172.3" y="288.2" width="3" height="3"/><rect x="172.3" y="293.8" width="3" height="3"/></g>
<path d="M199.3 281 L216.4 298 M216.4 281 L199.3 298" stroke="#a8a8a8" stroke-width="1.3"/>
<path d="M232.3 290 L240.3 296.8 L255.6 281.2" fill="none" stroke="#a8a8a8" stroke-width="1.3"/>
<text x="268.5" y="297" font-family="Liberation Serif" font-style="italic" font-size="25" fill="#2a2a2a" stroke="#2a2a2a" stroke-width="0.5">f</text>
<text x="279" y="297" font-family="Liberation Serif" font-style="italic" font-size="21" fill="#2a2a2a" stroke="#2a2a2a" stroke-width="0.5">x</text>
<path d="M299 286.2 L306 293.2 L313 286.2" fill="none" stroke="#a8a8a8" stroke-width="1.3"/>
<!-- search -->
<circle cx="1684.8" cy="25.3" r="6.3" fill="none" stroke="#5a5a5a" stroke-width="1.2"/>
<path d="M1680.3 30.5 L1672.4 39.2" stroke="#5a5a5a" stroke-width="1.2"/>
</svg>
<!--/ICONS-->
</body></html>
